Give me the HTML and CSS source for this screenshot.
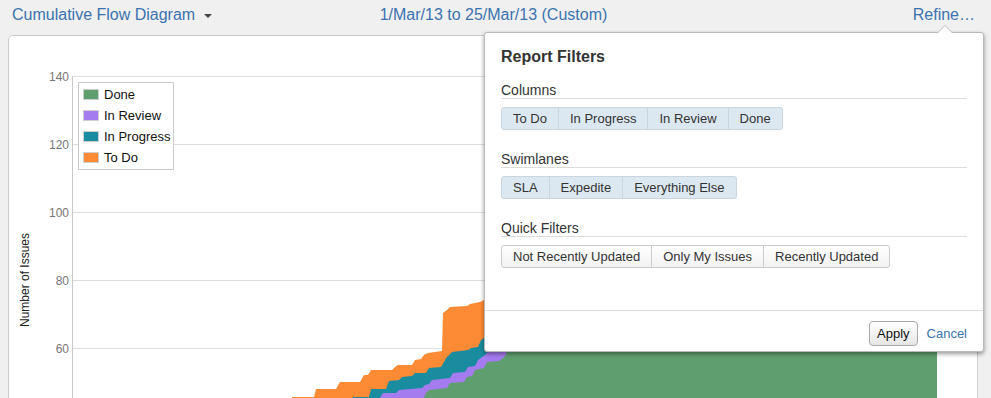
FILE: index.html
```html
<!DOCTYPE html>
<html lang="en">
<head>
<meta charset="utf-8">
<title>Cumulative Flow Diagram</title>
<link rel="stylesheet" href="styles.css">
</head>
<body>
<div class="page">
  <header class="bar">
    <div class="bar-left"><a class="link" href="#">Cumulative Flow Diagram</a><span class="caret"></span></div>
    <div class="bar-mid"><a class="link" href="#">1/Mar/13 to 25/Mar/13 (Custom)</a></div>
    <div class="bar-right"><a class="link" href="#">Refine…</a></div>
  </header>

  <section class="chart-panel">
    <svg class="chart" width="968" height="400" viewBox="9 36 968 400" xmlns="http://www.w3.org/2000/svg">
      <g class="grid">
        <line x1="72" y1="76.5" x2="937" y2="76.5"/>
        <line x1="72" y1="144.5" x2="937" y2="144.5"/>
        <line x1="72" y1="212.5" x2="937" y2="212.5"/>
        <line x1="72" y1="280.5" x2="937" y2="280.5"/>
        <line x1="72" y1="348.5" x2="937" y2="348.5"/>
      </g>
      <polygon fill="#fd8a34" points="292,440 292,397 314,397 316,389 336,389 340,382 360,382 364,375 368,375 371,370 392,370 395,367 398,365 412,365 415,360 421,359 424,355 428,353 442,351 443,313 447,310 450,307 467,306 470,304 480,302 484,300 520,290 937,190 937,440"/>
      <polygon fill="#1a8ca0" points="353,440 353,397 369,397 371,389 386,389 389,381 399,380 402,377 412,376 415,373 426,373 429,368 441,367 444,362 446,358 452,352 468,350 471,348 478,347 481,340 484,338 520,325 937,240 937,440"/>
      <polygon fill="#a57bf0" points="370,440 370,398 380,398 383,393 396,393 399,390 422,388 425,385 429,384 432,380 450,378 453,373 465,372 468,367 475,366 478,360 485,355 488,352 520,340 937,290 937,440"/>
      <polygon fill="#5f9e6e" points="423,440 423,400 426,393 429,390 447,388 450,383 464,382 467,377 472,376 475,370 484,368 487,362 499,361 503,358 506,355 508,348 540,335 937,320 937,440"/>
      <line class="axis" x1="72.5" y1="76" x2="72.5" y2="440"/>
      <g class="ticks">
        <text x="69" y="81">140</text>
        <text x="69" y="149">120</text>
        <text x="69" y="217">100</text>
        <text x="69" y="285">80</text>
        <text x="69" y="353">60</text>
      </g>
      <text class="ylabel" x="29" y="280" transform="rotate(-90 29 280)">Number of Issues</text>
    </svg>

    <ul class="legend">
      <li><span class="sw sw-done"></span>Done</li>
      <li><span class="sw sw-review"></span>In Review</li>
      <li><span class="sw sw-progress"></span>In Progress</li>
      <li><span class="sw sw-todo"></span>To Do</li>
    </ul>
  </section>

  <div class="popup">
    <div class="popup-body">
      <h2 class="popup-title">Report Filters</h2>
      <div class="group">
        <h3 class="group-label">Columns</h3>
        <div class="btns">
          <span class="btn on">To Do</span><span class="btn on">In Progress</span><span class="btn on">In Review</span><span class="btn on">Done</span>
        </div>
      </div>
      <div class="group">
        <h3 class="group-label">Swimlanes</h3>
        <div class="btns">
          <span class="btn on">SLA</span><span class="btn on">Expedite</span><span class="btn on">Everything Else</span>
        </div>
      </div>
      <div class="group">
        <h3 class="group-label">Quick Filters</h3>
        <div class="btns">
          <span class="btn">Not Recently Updated</span><span class="btn">Only My Issues</span><span class="btn">Recently Updated</span>
        </div>
      </div>
    </div>
    <div class="popup-foot">
      <button class="apply" type="button">Apply</button>
      <a class="link cancel" href="#">Cancel</a>
    </div>
  </div>
</div>
</body>
</html>
```

FILE: styles.css
```css
html, body {
  margin: 0;
  padding: 0;
}

body {
  background: #f0f0f0;
  font-family: "Liberation Sans", Arial, Helvetica, sans-serif;
  color: #333;
  overflow: hidden;
}

.page {
  position: relative;
  width: 991px;
  height: 398px;
  overflow: hidden;
}

.link {
  color: #3b73af;
  text-decoration: none;
}

/* Header bar */
.bar {
  display: grid;
  grid-template-columns: 1fr auto 1fr;
  height: 35px;
  padding: 0 16px 0 12px;
  box-sizing: border-box;
  font-size: 16px;
  line-height: 30px;
}

.bar-left {
  display: flex;
  align-items: center;
  height: 30px;
}

.caret {
  display: inline-block;
  width: 0;
  height: 0;
  margin-left: 9px;
  margin-top: 2px;
  border-left: 4px solid transparent;
  border-right: 4px solid transparent;
  border-top: 4px solid #444;
}

.bar-right {
  text-align: right;
}

/* Chart panel */
.chart-panel {
  position: relative;
  margin-left: 8px;
  width: 968px;
  height: 400px;
  background: #fff;
  border: 1px solid #cccccc;
  border-radius: 5px 5px 0 0;
}

.chart {
  display: block;
}

.grid line {
  stroke: #dddddd;
  stroke-width: 1;
}

.axis {
  stroke: #c8c8c8;
  stroke-width: 1;
}

.ticks text {
  font-family: "Liberation Sans", Arial, sans-serif;
  font-size: 12px;
  fill: #777;
  text-anchor: end;
}

.ylabel {
  font-family: "Liberation Sans", Arial, sans-serif;
  font-size: 12px;
  fill: #222;
  text-anchor: middle;
}

.legend {
  position: absolute;
  left: 69px;
  top: 46px;
  width: 90px;
  margin: 0;
  padding: 1px 0 1px 4px;
  box-sizing: content-box;
  list-style: none;
  background: #fff;
  border: 1px solid #cccccc;
  font-size: 13px;
  color: #111;
}

.legend li {
  display: flex;
  align-items: center;
  height: 21px;
  white-space: nowrap;
}

.sw {
  width: 14px;
  height: 9px;
  margin-right: 5px;
  border: 1px solid #cfcfcf;
}

.sw-done { background: #5f9e6e; }
.sw-review { background: #a57bf0; }
.sw-progress { background: #1a8ca0; }
.sw-todo { background: #fd8a34; }

/* Popup */
.popup {
  position: absolute;
  left: 484px;
  top: 32px;
  width: 500px;
  box-sizing: border-box;
  background: #fff;
  border: 1px solid #bbbbbb;
  border-radius: 3px;
  box-shadow: 0 2px 4px rgba(0, 0, 0, 0.4);
}

.popup::before,
.popup::after {
  content: "";
  position: absolute;
  width: 0;
  height: 0;
  border-style: solid;
  border-color: transparent;
  border-top-width: 0;
}

.popup::before {
  top: -8px;
  left: 452px;
  border-width: 0 8px 8px 8px;
  border-bottom-color: #bbbbbb;
}

.popup::after {
  top: -7px;
  left: 453px;
  border-width: 0 7px 7px 7px;
  border-bottom-color: #fff;
}

.popup-body {
  padding: 14px 16px 42px;
}

.popup-title {
  margin: 0;
  font-size: 16px;
  line-height: 20px;
  font-weight: bold;
  color: #333;
}

.group {
  margin-top: 22px;
}

.group:first-of-type {
  margin-top: 16px;
}

.group-label {
  margin: 0;
  font-size: 14px;
  font-weight: normal;
  line-height: 15px;
  color: #333;
  border-bottom: 1px solid #dddddd;
}

.btns {
  display: flex;
  margin-top: 8px;
}

.btn {
  display: block;
  padding: 0 11px;
  font-size: 13px;
  line-height: 21px;
  color: #333;
  background: linear-gradient(#ffffff, #f2f2f2);
  border: 1px solid #cccccc;
}

.btn + .btn {
  margin-left: -1px;
}

.btn:first-child {
  border-radius: 3px 0 0 3px;
}

.btn:last-child {
  border-radius: 0 3px 3px 0;
}

.btn.on {
  background: #dce8f1;
  border-color: #c9d6e0;
}

.popup-foot {
  display: flex;
  justify-content: flex-end;
  align-items: center;
  gap: 9px;
  padding: 10px 16px 5px;
  border-top: 1px solid #dddddd;
}

.apply {
  height: 25px;
  padding: 0 7px;
  font-family: "Liberation Sans", Arial, sans-serif;
  font-size: 13px;
  color: #111;
  background: linear-gradient(#ffffff, #e6e6e6);
  border: 1px solid #aaaaaa;
  border-radius: 4px;
}

.cancel {
  font-size: 13px;
}
```
